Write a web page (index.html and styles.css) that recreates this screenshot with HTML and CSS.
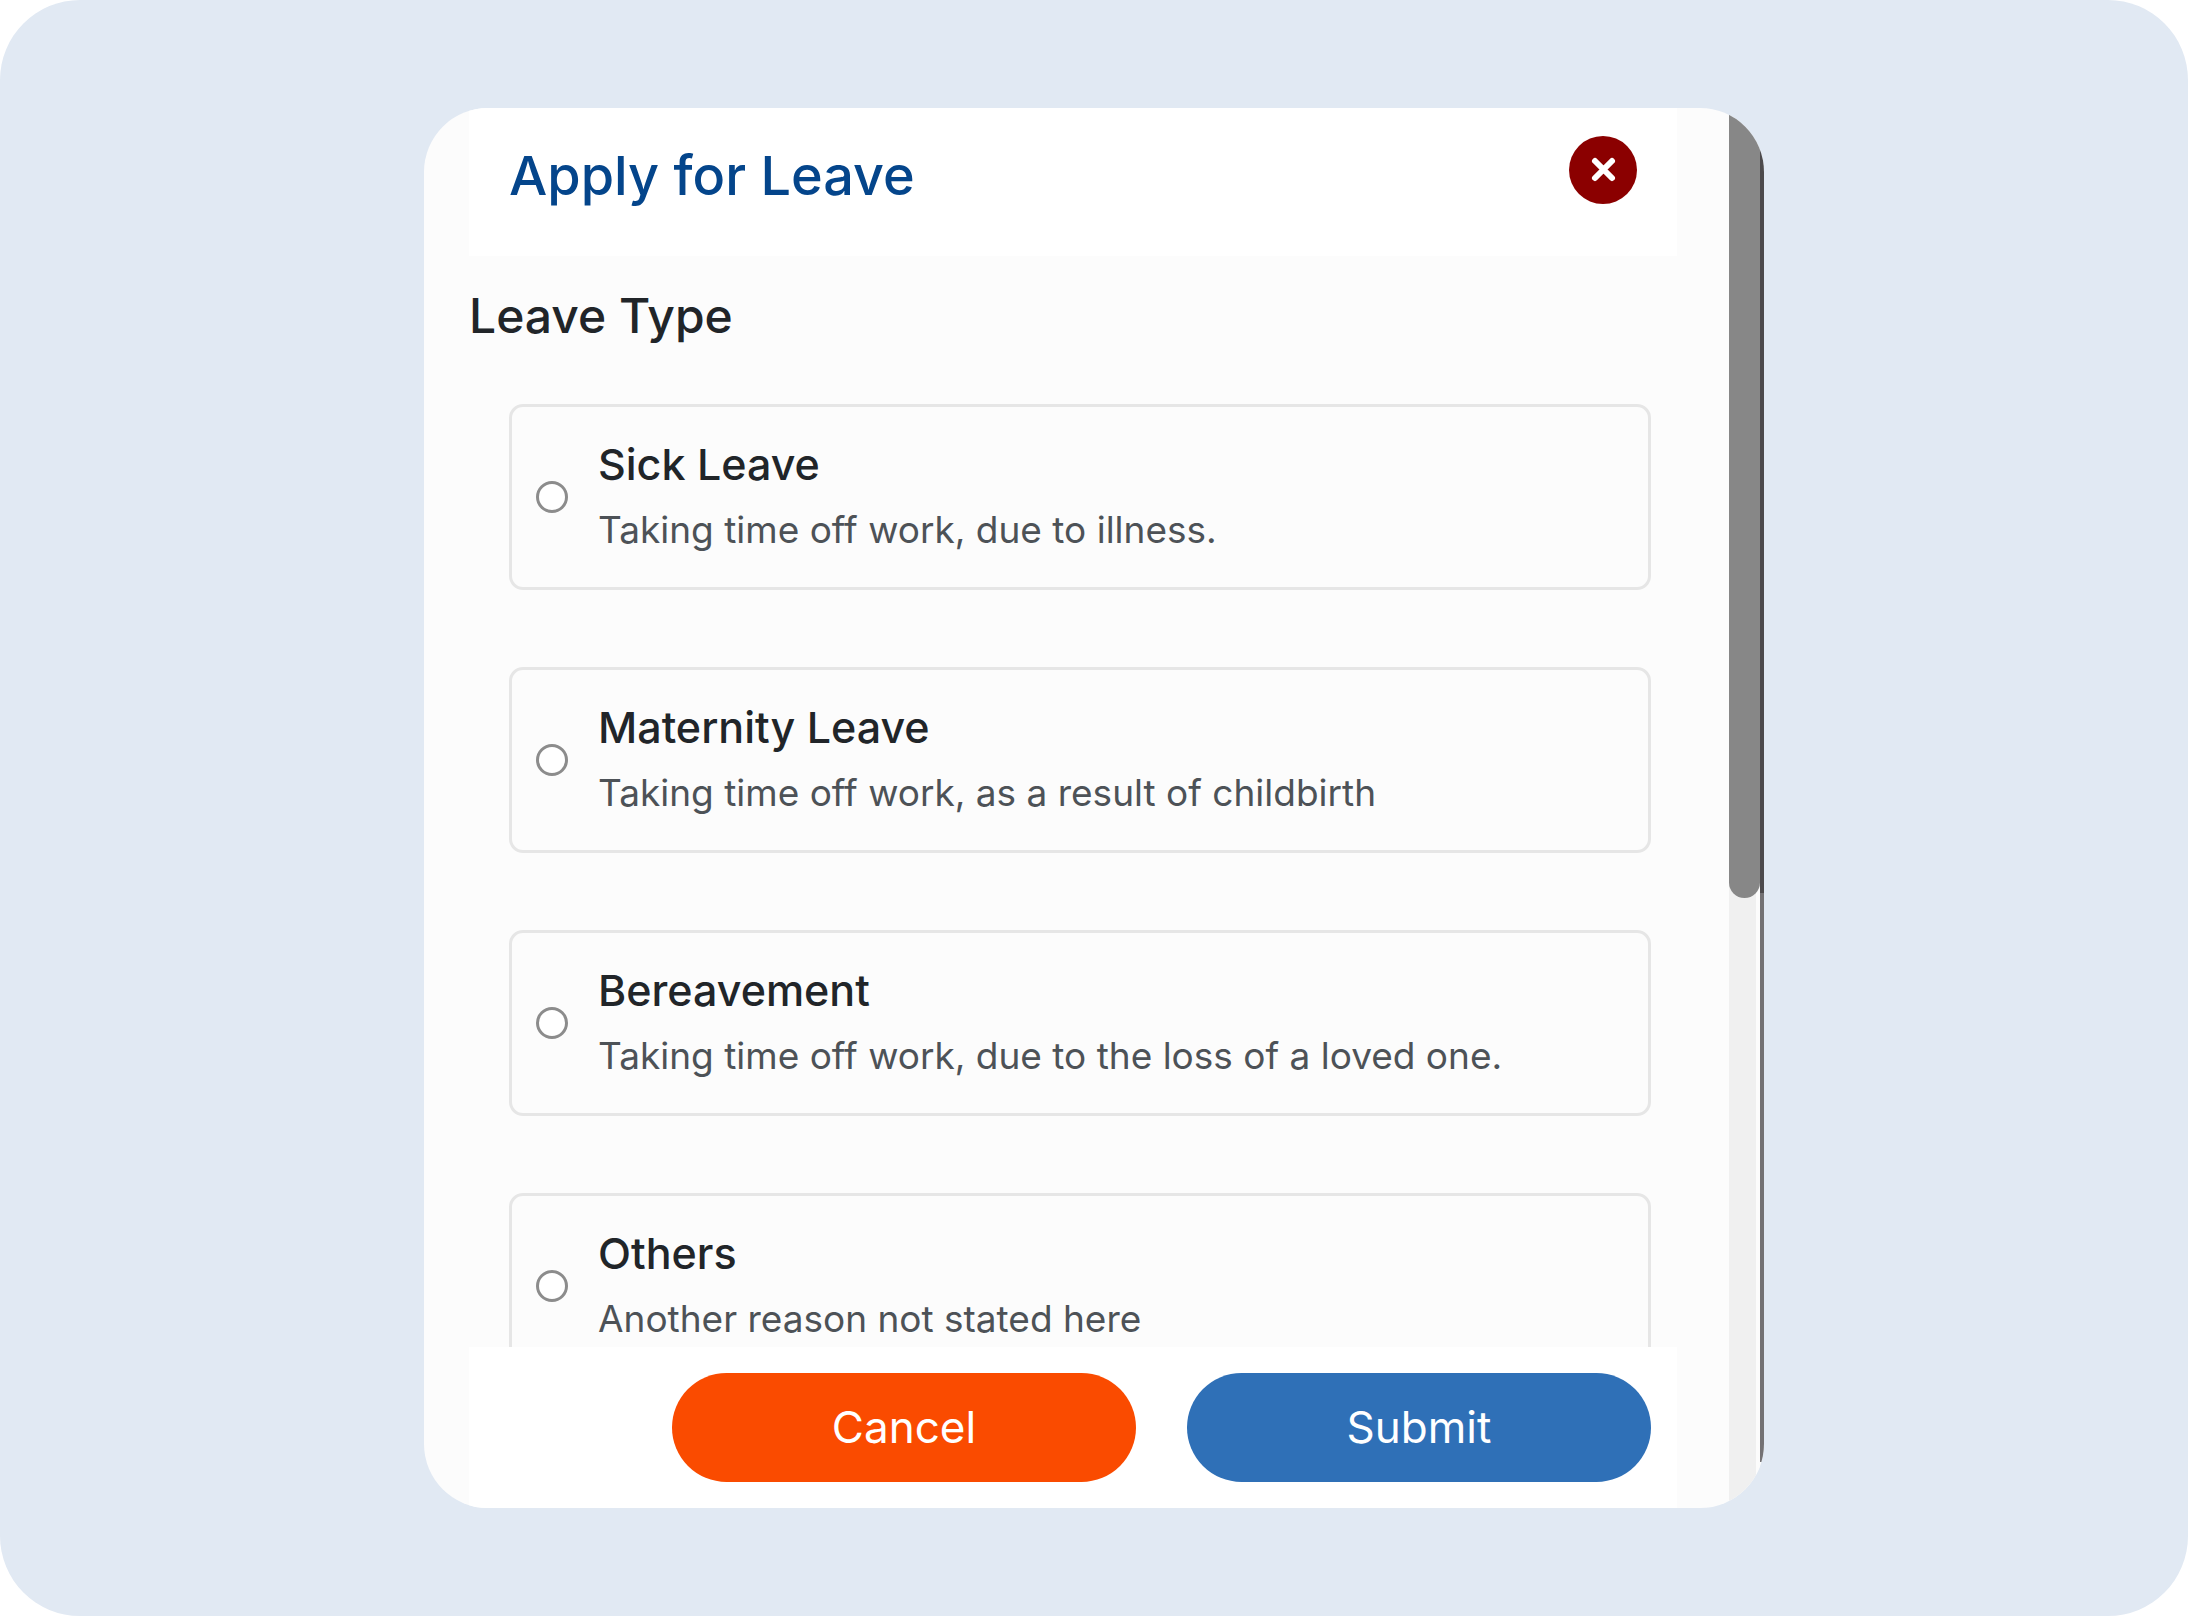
FILE: index.html
```html
<!DOCTYPE html>
<html lang="en">
<head>
    <meta charset="UTF-8">
    <meta name="viewport" content="width=device-width, initial-scale=1.0">
    <title>Apply for Leave</title>
    <link rel="stylesheet" href="styles.css">
</head>
<body>

<div class="page">
    <form class="modal">
        <div class="modal-content">
            <header class="modal-header">
                <h1>Apply for Leave</h1>
                <button type="button" class="close" aria-label="Close">
                    <svg viewBox="0 0 68 68">
                        <path d="M26 25 L43 42 M43 25 L26 42" stroke="#fff" stroke-width="6" stroke-linecap="round"/>
                    </svg>
                </button>
            </header>

            <div class="modal-body">
                <h2>Leave Type</h2>
                <div class="options">
                    <label class="option">
                        <input type="radio" name="leave_type" value="sick">
                        <span class="option-text">
                            <span class="option-title">Sick Leave</span>
                            <span class="option-info">Taking time off work, due to illness.</span>
                        </span>
                    </label>
                    <label class="option">
                        <input type="radio" name="leave_type" value="maternity">
                        <span class="option-text">
                            <span class="option-title">Maternity Leave</span>
                            <span class="option-info">Taking time off work, as a result of childbirth</span>
                        </span>
                    </label>
                    <label class="option">
                        <input type="radio" name="leave_type" value="bereavement">
                        <span class="option-text">
                            <span class="option-title">Bereavement</span>
                            <span class="option-info">Taking time off work, due to the loss of a loved one.</span>
                        </span>
                    </label>
                    <label class="option">
                        <input type="radio" name="leave_type" value="others">
                        <span class="option-text">
                            <span class="option-title">Others</span>
                            <span class="option-info">Another reason not stated here</span>
                        </span>
                    </label>
                </div>
            </div>

            <footer class="modal-footer">
                <button type="button" class="btn btn-cancel">Cancel</button>
                <button type="submit" class="btn btn-submit">Submit</button>
            </footer>
        </div>

        <div class="scrollbar"><div class="thumb"></div></div>
        <div class="edge"></div>
    </form>
</div>

</body>
</html>
```
FILE: styles.css
```css
* {
    box-sizing: border-box;
}

body {
    margin: 0;
    background-color: #fff;
    font-family: Inter, "Open Sans", sans-serif;
    color: #212529;
}

h1, h2 {
    margin: 0;
    font-weight: 500;
}

.page {
    display: flex;
    justify-content: center;
    height: 100vh;
    padding: 108px 24px;
    background-color: #e1e9f3;
    border-radius: 80px;
}

/* Modal */
.modal {
    display: flex;
    width: 100%;
    max-width: 1340px;
    background-color: #fcfcfc;
    border-radius: 64px;
    overflow: hidden;
}

.modal-content {
    flex: 1;
    display: flex;
    flex-direction: column;
    min-width: 0;
    padding: 0 52px 0 45px;
}

.modal-header {
    display: flex;
    justify-content: space-between;
    align-items: flex-start;
    height: 148px;
    padding: 28px 40px;
    background-color: #fff;
}

h1 {
    font-size: 54px;
    line-height: 80px;
    color: #04458b;
}

.close {
    width: 68px;
    height: 68px;
    padding: 0;
    border: none;
    border-radius: 50%;
    background-color: #8b0000;
    cursor: pointer;
}

.close svg {
    display: block;
}

.modal-body {
    flex: 1;
    min-height: 0;
    overflow: hidden;
}

h2 {
    padding: 30px 0 58px;
    font-size: 48px;
    line-height: 60px;
}

/* Leave options */
.options {
    display: flex;
    flex-direction: column;
    gap: 77px;
    padding: 0 26px 0 40px;
}

.option {
    display: flex;
    align-items: center;
    gap: 30px;
    padding: 29px 24px;
    border: 3px solid #e6e6e6;
    border-radius: 14px;
    cursor: pointer;
}

.option input {
    appearance: none;
    flex: none;
    width: 32px;
    height: 32px;
    margin: 0;
    border: 3px solid #8c8c8c;
    border-radius: 50%;
    background-color: #fff;
}

.option input:checked {
    border: 10px solid #2f70b7;
}

.option-title, .option-info {
    display: block;
}

.option-title {
    font-size: 43px;
    line-height: 56px;
    font-weight: 500;
}

.option-info {
    margin-top: 10px;
    font-size: 37px;
    line-height: 56px;
    font-weight: 400;
    color: #4d5257;
}

/* Buttons */
.modal-footer {
    display: flex;
    justify-content: flex-end;
    gap: 51px;
    padding: 26px 26px 26px 40px;
    background-color: #fff;
}

.btn {
    width: 464px;
    height: 109px;
    padding: 0 0 2px;
    border: none;
    border-radius: 56px;
    font-family: inherit;
    font-size: 44px;
    color: #fff;
    cursor: pointer;
}

.btn-cancel {
    background-color: #fa4b00;
}

.btn-submit {
    background-color: #2f70b7;
}

/* Scrollbar */
.scrollbar {
    width: 31px;
    padding-bottom: 14px;
    background: linear-gradient(to right, #f0f0f0 27px, #fcfcfc 27px);
}

.thumb {
    height: 57%;
    background-color: #878787;
    border-radius: 0 0 16px 16px;
}

.edge {
    width: 4px;
    margin-bottom: 46px;
    background: linear-gradient(#4c4a4c 58%, #737173 58%);
}
```
